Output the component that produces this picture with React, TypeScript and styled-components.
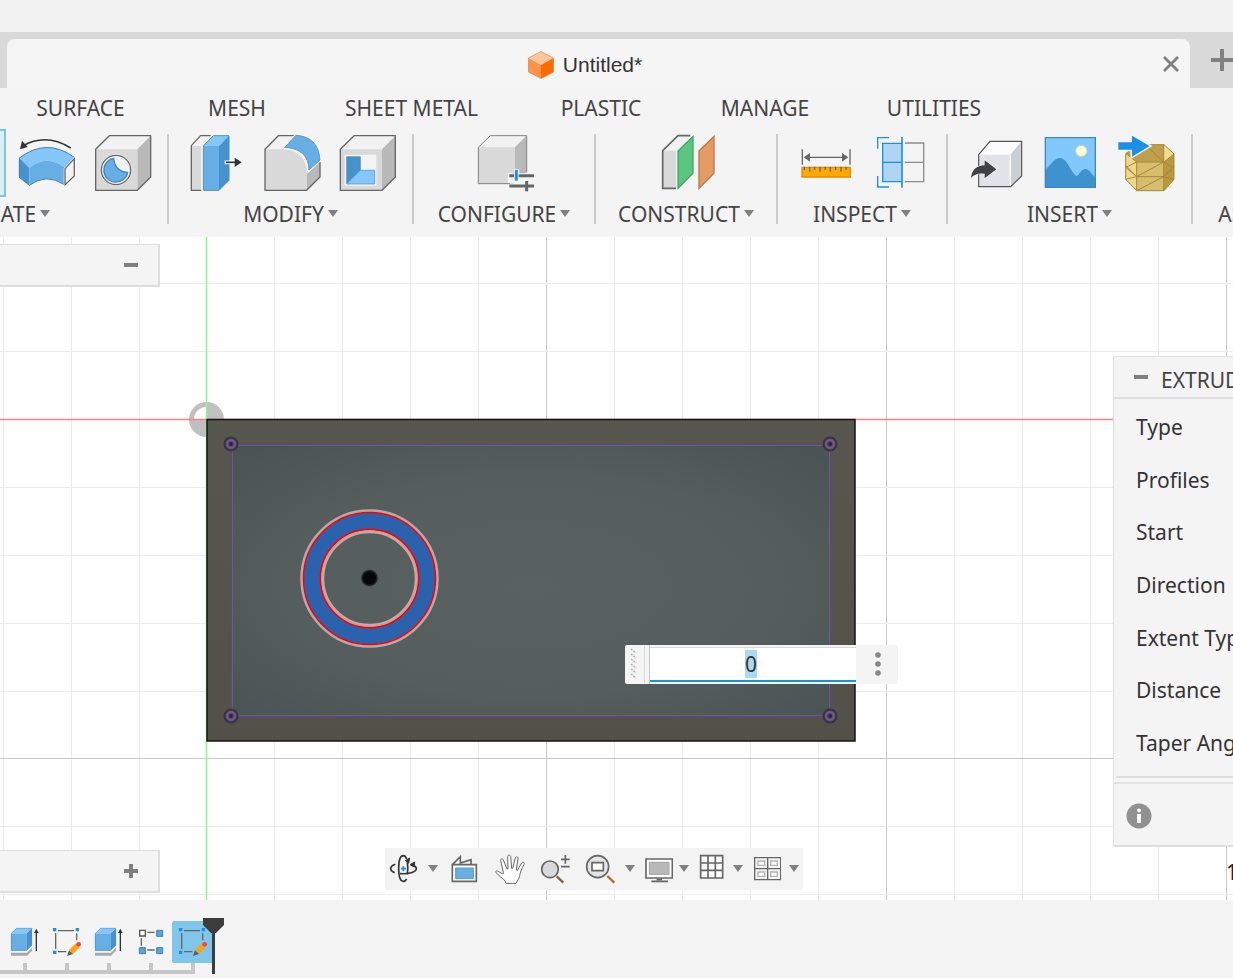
import React, { useEffect, useRef } from "react";
import styled, { createGlobalStyle } from "styled-components";

const GlobalStyle = createGlobalStyle`
  * { box-sizing: border-box; }
  html, body { margin: 0; padding: 0; }
  body {
    font-family: "Noto Sans", "Open Sans", sans-serif;
    font-size: 21px;
    color: #3c3c3c;
    background: #f4f4f4;
    overflow: hidden;
  }
  button {
    border: 0;
    padding: 0;
    background: none;
    font: inherit;
    color: inherit;
    cursor: pointer;
  }
  svg { display: block; flex: none; }
`;

/* ---------- page ---------- */

const Page = styled.div`
  display: flex;
  flex-direction: column;
  min-height: 100vh;
  overflow: hidden;
`;

const TitleStrip = styled.div`
  height: 32px;
  background: #f2f2f2;
`;

const DocumentBar = styled.header`
  display: flex;
  height: 56px;
  padding: 7px 0 0 7px;
  background: #d9d9d9;
`;

const DocumentTab = styled.div`
  flex: 1;
  display: flex;
  align-items: center;
  padding-right: 11px;
  border-radius: 8px 8px 0 0;
  background: #f5f5f5;
`;

const DocumentTitle = styled.div`
  flex: 1;
  display: flex;
  align-items: center;
  justify-content: center;
  gap: 9px;
  padding-top: 2px;
  font-family: "Liberation Sans", Arial, sans-serif;
  font-size: 21px;
  line-height: 24px;
  color: #333;
`;

const CloseButton = styled.button`
  width: 16px;
  height: 16px;
`;

const NewTabButton = styled.button`
  display: flex;
  align-items: center;
  width: 43px;
  height: 42px;
  padding-left: 21px;
  overflow: hidden;
`;

/* ---------- ribbon ---------- */

const Ribbon = styled.section`
  padding-bottom: 6px;
  background: #f4f4f4;
  color: #444;
  overflow: hidden;
`;

const RibbonTabs = styled.nav`
  display: flex;
  height: 40px;
`;

const RibbonTab = styled.button<{ $width: number }>`
  flex: none;
  width: ${(p) => p.$width}px;
  text-align: center;
  line-height: 28px;
  white-space: nowrap;
`;

const Groups = styled.div`
  display: flex;
  align-items: flex-start;
`;

const Group = styled.div<{ $width: number; $hidden?: number }>`
  flex: none;
  width: ${(p) => p.$width}px;
  margin-left: ${(p) => -(p.$hidden ?? 0)}px;
  padding-top: 1px;
`;

const Separator = styled.div`
  flex: none;
  width: 2px;
  height: 90px;
  margin-top: 6px;
  background: #cbcbcb;
`;

const ToolRow = styled.div<{ $inset: number }>`
  display: flex;
  gap: 7px;
  height: 68px;
  padding-left: ${(p) => p.$inset}px;
`;

const ToolButton = styled.button<{ $active?: boolean }>`
  flex: none;
  width: 68px;
  height: 68px;
  ${(p) => p.$active && "background: #dcedf7; border: 2px solid #7fc4e8;"}
`;

const GroupMenu = styled.button`
  display: flex;
  align-items: center;
  justify-content: center;
  gap: 4px;
  width: 100%;
  height: 34px;
  line-height: 28px;
  white-space: nowrap;
`;

/* ---------- viewport ---------- */

const Viewport = styled.main`
  position: relative;
  flex: 1;
  min-height: 663px;
  background: #fff;
  overflow: hidden;
`;

const Scene = styled.svg`
  position: absolute;
  inset: 0;
  width: 100%;
  height: 100%;
`;

const SidePanel = styled.div<{ $place: "top" | "bottom" }>`
  position: absolute;
  left: 0;
  ${(p) => p.$place}: 7px;
  display: flex;
  align-items: center;
  justify-content: flex-end;
  width: 160px;
  height: 43px;
  padding-right: 20px;
  background: #f4f4f4;
  border: solid #dedede;
  border-width: 1px 2px 2px 0;
`;

const ExtrudePanel = styled.section`
  position: absolute;
  top: 119px;
  right: 0;
  width: 120px;
  background: #f4f4f4;
  border: solid #dedede;
  border-width: 1px 0 2px 1px;
  overflow: hidden;
  white-space: nowrap;
`;

const PanelHeader = styled.div`
  display: flex;
  align-items: center;
  gap: 13px;
  height: 42px;
  padding: 6px 0 0 20px;
  border-bottom: 2px solid #dedede;
`;

const PanelToggle = styled.button`
  display: block;
  padding-bottom: 6px;
`;

const PanelTitle = styled.h2`
  margin: 0;
  font-size: 21px;
  font-weight: 400;
  line-height: 28px;
  color: #444;
`;

const PanelRows = styled.div`
  display: grid;
  grid-template-rows: repeat(7, 1fr);
  align-items: center;
  height: 379px;
  margin-left: 2px;
  padding: 2px 0 7px 20px;
  border-bottom: 2px solid #dedede;
  line-height: 28px;
  color: #333;
`;

const PanelFooter = styled.div`
  display: flex;
  align-items: center;
  height: 61px;
  padding: 3px 0 0 12px;
`;

const FooterRule = styled.div`
  height: 6px;
  border-bottom: 2px solid #e2e2e2;
`;

const ValueBox = styled.div`
  position: absolute;
  top: 408px;
  left: 625px;
  display: flex;
  width: 273px;
  height: 39px;
  border-radius: 2px;
  background: #f4f4f4;
  overflow: hidden;
`;

const Grip = styled.div`
  width: 25px;
  border-right: 1px solid #c8c8c8;
`;

const ValueInput = styled.input`
  width: 206px;
  height: 35px;
  margin-top: 2px;
  padding: 0 4px 0 0;
  border: 0;
  border-top: 1px solid #d8d8d8;
  border-bottom: 2px solid #1296d8;
  outline: 0;
  background: #fff;
  font-family: inherit;
  font-size: 21px;
  color: #333;
  text-align: center;
  &::selection { background: #a9daf2; color: #333; }
`;

const MoreButton = styled.button`
  flex: 1;
  display: flex;
  align-items: center;
  justify-content: center;
  padding: 0 0 2px 2px;
`;

const ViewToolbar = styled.div`
  position: absolute;
  left: 385px;
  bottom: 10px;
  display: flex;
  height: 42px;
  padding-right: 4px;
  background: #f3f3f3;
`;

const ViewButton = styled.button<{ $width: number }>`
  flex: none;
  display: flex;
  align-items: center;
  justify-content: center;
  width: ${(p) => p.$width}px;
`;

const StatusText = styled.div`
  position: absolute;
  left: calc(100% - 7px);
  bottom: 14px;
  line-height: 28px;
  white-space: nowrap;
  color: #222;
`;

/* ---------- timeline ---------- */

const Timeline = styled.footer`
  height: 78px;
  padding-top: 21px;
  background: #f4f4f4;
`;

const TimelineStrip = styled.div`
  position: relative;
  width: fit-content;
  padding-left: 4px;
`;

const Features = styled.div`
  display: flex;
`;

const Feature = styled.div`
  display: flex;
  flex-direction: column;
  align-items: center;
  &::after {
    content: "";
    width: 4px;
    height: 7px;
    background: #c6c6c6;
  }
`;

const FeatureButton = styled.button<{ $current?: boolean }>`
  width: 42px;
  height: 42px;
  border-radius: 2px;
  background: ${(p) => (p.$current ? "#7fc6ea" : "none")};
`;

const Track = styled.div`
  height: 4px;
  margin: 0 19px 0 -4px;
  background: #c6c6c6;
`;

const Marker = styled.svg`
  position: absolute;
  right: -10px;
  top: -3px;
`;

/* ---------- small drawings ---------- */

const Caret = () => (
  <svg width="10" height="12" viewBox="0 0 10 12">
    <path d="M0 2h10L5 9z" fill="#808080" />
  </svg>
);

const Minus = () => (
  <svg width="14" height="14" viewBox="0 0 14 14">
    <path d="M0 7h14" stroke="#808080" strokeWidth="4" />
  </svg>
);

const Plus = () => (
  <svg width="14" height="14" viewBox="0 0 14 14">
    <path d="M0 7h14M7 0v14" stroke="#808080" strokeWidth="4" />
  </svg>
);

const ToolIcon = ({ x, children }: { x: number; children: React.ReactNode }) => (
  <svg width="68" height="68" viewBox={`${x} 117 204 204`}>
    {children}
  </svg>
);

const Bend = () => (
  <ToolIcon x={39}>
    <path d="M68 168q70-40 144 6" fill="none" stroke="#333" strokeWidth="4.5" />
    <path d="M60 178l6-26 17 19z" fill="#333" />
    <path d="M58 204q82-62 165-2l-30 30q-54-40-105 2z" fill="#86c7f9" />
    <path d="M58 204l30 30v52l-30-24z" fill="#4592cd" />
    <path d="M88 234q51-42 105-2v52q-54-36-105 2z" fill="#67aee4" />
    <path d="M58 204q82-62 165-2l-30 30v52q-54-36-105 2l-30-24z" fill="none" stroke="#3c7fb5" strokeWidth="3" />
    <path d="M195 236l28-30v52l-28 26z" fill="#f4f4f4" stroke="#fff" strokeWidth="8" />
    <path d="M195 236l28-30v52l-28 26z" fill="#f2f2f2" stroke="#666" strokeWidth="4" />
  </ToolIcon>
);

const CubeBody = () => (
  <>
    <path d="M287 178l41-41h124l-40 41z" fill="#f2f2f2" />
    <path d="M412 178l40-41v124l-40 40z" fill="#b9b9b9" />
    <path d="M287 178h125v123H287z" fill="#d9d9d9" />
    <path d="M287 178l41-41h124v124l-40 40H287z" fill="none" stroke="#666" strokeWidth="4" strokeLinejoin="round" />
  </>
);

const Hole = () => (
  <ToolIcon x={264}>
    <CubeBody />
    <circle cx="348" cy="240" r="47" fill="#fff" />
    <circle cx="348" cy="240" r="44" fill="#f2f2f2" stroke="#666" strokeWidth="4" />
    <path d="M341 205c2 26 18 42 42 42a36 36 0 1 1-42-42z" fill="#67aee4" stroke="#3e88c2" strokeWidth="4" />
  </ToolIcon>
);

const PressPull = () => (
  <ToolIcon x={549}>
    <path d="M575 168l27-31h30l-28 30v134h-29z" fill="#d9d9d9" />
    <path d="M575 168l27-31h32l-28 31z" fill="#f2f2f2" />
    <path d="M604 301h-30V167l28-30h30" fill="none" stroke="#666" strokeWidth="4" />
    <path d="M607 304V165l32-30h51" fill="none" stroke="#fff" strokeWidth="4" />
    <path d="M610 168l30-31h47l-30 31z" fill="#86c7f9" />
    <path d="M610 168h47v133h-47z" fill="#67aee4" />
    <path d="M657 168l30-31v134l-30 30z" fill="#4592cd" />
    <path d="M610 168l30-31h47v134l-30 30h-47z" fill="none" stroke="#4592cd" strokeWidth="3" />
    <path d="M674 217h34" stroke="#fff" strokeWidth="11" />
    <path d="M678 217h30" stroke="#333" strokeWidth="5" />
    <path d="M704 203l21 14-21 14z" fill="#333" />
  </ToolIcon>
);

const Fillet = () => (
  <ToolIcon x={774}>
    <path d="M795 178l40-41h50l-32 41z" fill="#f2f2f2" />
    <path d="M920 245l40-30v46l-40 40z" fill="#b9b9b9" />
    <path d="M795 178h56q70 6 70 76v47H795z" fill="#d9d9d9" />
    <path d="M883 137h-48l-40 41v123h125l40-40v-45" fill="none" stroke="#666" strokeWidth="4" strokeLinejoin="round" />
    <path d="M854 172l34-36q67 4 72 74l-33 30q-2-64-73-68z" fill="#67aee4" stroke="#fff" strokeWidth="9" />
    <path d="M854 172l34-36q67 4 72 74l-33 30q-2-64-73-68z" fill="#67aee4" stroke="#559bd0" strokeWidth="3" />
  </ToolIcon>
);

const Shell = () => (
  <ToolIcon x={999}>
    <g transform="translate(734 0)">
      <CubeBody />
    </g>
    <path d="M1034 194h95v93h-95z" fill="#f4f4f4" />
    <path d="M1040 200h41v41l-41 41z" fill="#4592cd" />
    <path d="M1081 241h43v41h-84z" fill="#86c7f9" />
    <path d="M1081 241v-41h-41v82h84v-41h-43l-39 39" fill="none" stroke="#3e88c2" strokeWidth="2" />
  </ToolIcon>
);

const Configure = () => (
  <ToolIcon x={180}>
    <path d="M205 172l36-35h109l-36 35z" fill="#f2f2f2" />
    <path d="M314 172l36-35v109l-36 35z" fill="#b9b9b9" />
    <path d="M205 172h109v109H205z" fill="#d9d9d9" />
    <path d="M300 281h-95V172l36-35h109v110" fill="none" stroke="#808080" strokeWidth="3" />
    <path d="M293 250h20v-10h15v10h48v40h-64v-12h-19z" fill="#f4f4f4" />
    <path d="M298 257h74M298 288h74" stroke="#666" strokeWidth="9" />
    <path d="M350 273v31" stroke="#666" strokeWidth="9" />
    <path d="M319 238v36" stroke="#fff" strokeWidth="14" />
    <path d="M319 240v32" stroke="#1b8fe6" strokeWidth="9" />
  </ToolIcon>
);

const Construct = () => (
  <ToolIcon x={726}>
    <path d="M757 182l47-45h38l-42 45z" fill="#f2f2f2" />
    <path d="M757 182h42v113h-42z" fill="#d9d9d9" />
    <path d="M798 295h-40V182l46-45h37" fill="none" stroke="#666" strokeWidth="5" />
    <path d="M804 183l45-44v111l-45 45z" fill="#5ac67f" stroke="#fff" strokeWidth="8" />
    <path d="M804 183l45-44v111l-45 45z" fill="#5ac67f" stroke="#41a566" strokeWidth="4" />
    <path d="M867 183l45-44v111l-45 45z" fill="#e69a64" stroke="#bc794c" strokeWidth="4" />
  </ToolIcon>
);

const Measure = () => (
  <ToolIcon x={6}>
    <path d="M37 178v46M180 178v46M52 202h112" stroke="#666" strokeWidth="4" fill="none" />
    <path d="M41 202l19-13v26zM175 202l-19-13v26z" fill="#666" />
    <path d="M36 232h145v29H36z" fill="#ffa800" stroke="#e08e00" strokeWidth="4" />
    <path d="M43 230v10M59 230v15M74 230v10M90 230v15M106 230v10M121 230v15M137 230v10M153 230v15M168 230v10" stroke="#666" strokeWidth="4" />
  </ToolIcon>
);

const Section = () => (
  <ToolIcon x={231}>
    <path d="M278 160h56v115h-56z" fill="#b0d4f1" />
    <path d="M336 160h-58v115h58M278 217h56M297 143h-34v33M263 258v33h34" fill="none" stroke="#1b8fe6" strokeWidth="4" />
    <path d="M336 141v152" stroke="#1b8fe6" strokeWidth="5" />
    <path d="M345 159h56v116h-56M345 217h56" fill="none" stroke="#8c8c8c" strokeWidth="4" />
  </ToolIcon>
);

const InsertPart = () => (
  <ToolIcon x={516}>
    <path d="M566 194l34-40h95l-34 40z" fill="#fcfcfd" />
    <path d="M661 194l34-40v104l-32 32z" fill="#cbced5" />
    <path d="M566 194h95v96h-95z" fill="#e1e3e8" />
    <path d="M566 194l34-40h95v104l-33 32h-96z" fill="none" stroke="#555" strokeWidth="3.5" />
    <path d="M661 196v92" stroke="#fff" strokeWidth="4" />
    <path d="M543 264q4-37 41-38v-15l35 27-35 27v-14q-27-4-41 13z" fill="#3f4347" stroke="#f4f4f4" strokeWidth="4" paintOrder="stroke" />
  </ToolIcon>
);

const InsertCanvas = () => (
  <ToolIcon x={741}>
    <path d="M766 143h150v149H766z" fill="#82c8fc" />
    <circle cx="874" cy="183" r="17" fill="#ffffcf" stroke="#b9d9b9" strokeWidth="3" />
    <path d="M766 240c20-20 28-36 44-36 22 0 32 44 50 54 10-6 14-21 26-21 14 0 18 16 30 25v30H766z" fill="#3e92cd" />
    <path d="M766 143h150v149H766z" fill="none" stroke="#3e88c2" strokeWidth="4" />
  </ToolIcon>
);

const InsertMesh = () => (
  <ToolIcon x={966}>
    <path d="M1007 192l33-28h82l30 28v76l-30 34h-82l-33-34z" fill="#d8bd6c" />
    <path d="M1007 190l33 26v86l-33-34z" fill="#efd88b" />
    <path d="M1040 164h82l-1 52h-81l-33-26z" fill="#bf9f4c" />
    <path d="M1122 164l30 28-30 24z" fill="#f3dc92" />
    <path d="M1152 192v76l-30 34v-86z" fill="#b9993f" />
    <path d="M1007 192l33-28h82l30 28v76l-30 34h-82l-33-34zM1007 190l33 26h82l30-24M1040 216v86M1121 164v138M1007 232l33-16M1007 232l33 28h81l31-26-31-18M1007 268l33-8M1152 268l-31-8M1040 260l81-44M1040 302l81-42M1066 164l55 52M1007 226l33 34M1121 260l31-34" fill="none" stroke="#a5893c" strokeWidth="3" />
    <path d="M985 157h41v-20l53 31-53 32v-21h-41z" fill="#1b8fe6" stroke="#f4f4f4" strokeWidth="9" paintOrder="stroke" />
  </ToolIcon>
);

const ViewIcon = ({ x, children }: { x: number; children: React.ReactNode }) => (
  <svg width="30" height="42" viewBox={`${x} 24 90 126`}>
    {children}
  </svg>
);

const Orbit = () => (
  <ViewIcon x={27}>
    <g fill="none" stroke="#333" strokeWidth="5">
      <path d="M80 117q-4 7-10 7c-9 0-14-17-14-39s5-38 14-38q6 0 10 10" />
      <path d="M82 67q3 17 0 36" />
      <path d="M46 73c-20 8-17 19-2 25M60 101c30 2 50-7 49-15q0-6-10-10" />
    </g>
    <path d="M76 62l13-8-3 16zM90 74l14-8-1 15z" fill="#333" stroke="#333" strokeWidth="3" />
    <path d="M63 86h15M70 79v15" stroke="#1b8fe6" strokeWidth="5" />
  </ViewIcon>
);

const LookAt = () => (
  <ViewIcon x={207}>
    <path d="M218 73l23-23v19l32-10v14" fill="#f4f4f4" stroke="#666" strokeWidth="5" />
    <path d="M217 74h72v50h-72z" fill="#fff" stroke="#666" strokeWidth="5" />
    <path d="M227 84h53v32h-53z" fill="#67aee4" stroke="#559bd0" strokeWidth="3" />
  </ViewIcon>
);

const Pan = () => (
  <ViewIcon x={345}>
    <path
      d="M378 130c-3-10-9-14-17-20-5-4-9-9-13-12-3-4 2-7 6-4l14 8c2 0 3-2 2-4l-8-36c-1-6 6-8 8-2l11 27 3-1-1-36c0-6 8-6 9 0l3 35h3l8-31c2-6 9-4 8 2l-5 34 3 1 13-22c4-5 10-1 7 4-8 14-11 24-13 34-2 9-6 14-11 23z"
      fill="#fff"
      stroke="#666"
      strokeWidth="3"
      strokeLinejoin="round"
    />
  </ViewIcon>
);

const Zoom = () => (
  <ViewIcon x={483}>
    <path d="M530 109l20 19" stroke="#8a6238" strokeWidth="7" />
    <circle cx="510" cy="88" r="25" fill="#d9d9d9" stroke="#666" strokeWidth="5" />
    <path d="M543 58h26M556 45v26M543 80h26" stroke="#666" strokeWidth="5" />
  </ViewIcon>
);

const ZoomWindow = () => (
  <ViewIcon x={615}>
    <path d="M682 108l21 20" stroke="#a86e24" strokeWidth="7" />
    <circle cx="653" cy="80" r="33" fill="#e4e4e4" stroke="#666" strokeWidth="5" />
    <path d="M636 68h34v24h-34z" fill="#fff" stroke="#666" strokeWidth="5" />
  </ViewIcon>
);

const Display = () => (
  <ViewIcon x={790}>
    <path d="M799 57h79v57h-79z" fill="#fff" stroke="#666" strokeWidth="5" />
    <path d="M809 67h59v36h-59z" fill="#b9b9b9" stroke="#a2a2a2" strokeWidth="3" />
    <path d="M831 118h16M815 124h50" stroke="#666" strokeWidth="5" />
  </ViewIcon>
);

const GridIcon = () => (
  <ViewIcon x={948}>
    <path d="M962 47h66v67h-66zM984 47v67M1006 47v67M962 69h66M962 91h66" fill="#fff" stroke="#666" strokeWidth="5" />
  </ViewIcon>
);

const Viewports = () => (
  <ViewIcon x={1113}>
    <path d="M1124 53h78v66h-78zM1163 53v66M1124 86h78" fill="#f4f4f4" stroke="#666" strokeWidth="4" />
    <path d="M1134 63h20v13h-20zM1172 63h20v13h-20zM1134 96h20v13h-20zM1172 96h20v13h-20z" fill="#fff" stroke="#b3b3b3" strokeWidth="4" />
  </ViewIcon>
);

const FeatureIcon = ({ x, children }: { x: number; children: React.ReactNode }) => (
  <svg width="42" height="42" viewBox={`${x} 243 126 126`}>
    {children}
  </svg>
);

const ExtrudeFeature = () => (
  <FeatureIcon x={12}>
    <path d="M33 338h48l15-15v9l-15 15H33z" fill="#a9a9a9" />
    <path d="M33 281l17-16h46l-17 16z" fill="#86c7f9" />
    <path d="M79 281l17-16v51l-17 16z" fill="#4592cd" />
    <path d="M33 281h46v51H33z" fill="#67aee4" />
    <path d="M34 280l16-15h45v51l-16 15H34z" fill="none" stroke="#4592cd" strokeWidth="2" />
    <path d="M109 333v-58" stroke="#333" strokeWidth="4" />
    <path d="M102 279l7-13 7 13z" fill="#333" />
  </FeatureIcon>
);

const SketchFeature = () => (
  <FeatureIcon x={138}>
    <path d="M174 272h48M167 279v48M174 335h25M230 280v21" stroke="#666" strokeWidth="4" />
    <path d="M159 264h10v10h-10zM227 264h10v10h-10zM159 332h10v10h-10z" fill="#1b8fe6" />
    <path d="M207 330l20-20 12 12-20 20z" fill="#ffa514" />
    <path d="M201 348l6-17 12 11z" fill="#5d5d5d" />
    <circle cx="236" cy="313" r="7" fill="#f5424a" />
  </FeatureIcon>
);

const PatternFeature = () => (
  <FeatureIcon x={390}>
    <path d="M442 277h22M424 295v22M442 330h22" stroke="#666" strokeWidth="4" />
    <path d="M419 271h17v17h-17z" fill="#fff" stroke="#555" strokeWidth="4" />
    <path d="M470 271h18v18h-18zM418 323h18v18h-18zM470 323h18v18h-18z" fill="#5ba3dc" stroke="#3e80b3" strokeWidth="3" />
  </FeatureIcon>
);

/* ---------- scene ---------- */

const PITCH = 67.93;
const columns = Array.from({ length: 64 }, (_, i) => i - 3);
const rows = Array.from({ length: 30 }, (_, i) => i - 2);
const corners = [
  [25, 25],
  [624, 25],
  [25, 297],
  [624, 297],
];

const lineColor = (i: number) => (i % 5 === 0 ? "#c9c9c9" : "#ececec");

const ModelScene = () => (
  <Scene aria-label="Model view">
    <defs>
      <radialGradient id="floor" cx="50%" cy="52%" r="68%">
        <stop offset="0" stopColor="#5a6261" />
        <stop offset="0.6" stopColor="#555e5d" />
        <stop offset="1" stopColor="#4b5454" />
      </radialGradient>
      <linearGradient id="wall" x1="0" y1="0" x2="0" y2="1">
        <stop offset="0" stopColor="#57574f" />
        <stop offset="1" stopColor="#534f49" />
      </linearGradient>
      <radialGradient id="hub">
        <stop offset="0.7" stopColor="#050808" />
        <stop offset="1" stopColor="#050808" stopOpacity="0.4" />
      </radialGradient>
    </defs>
    {columns.map((i) => {
      const x = Math.round(206.55 + i * PITCH) + 0.5;
      return i === 0 ? null : <line key={i} x1={x} x2={x} y1="0" y2="100%" stroke={lineColor(i)} />;
    })}
    {rows.map((i) => {
      const y = Math.round(181.8 + i * PITCH) + 0.5;
      return i === 0 ? null : <line key={i} x1="0" x2="100%" y1={y} y2={y} stroke={lineColor(i)} />;
    })}
    <circle cx="206.5" cy="182.5" r="17.5" fill="#c0c0c0" />
    <path d="M206.5 182.5v-12.5a12.5 12.5 0 0 0-12.5 12.5z" fill="#fff" />
    <line x1="0" x2="100%" y1="182.5" y2="182.5" stroke="#ff8080" strokeWidth="1.5" />
    <line x1="206.5" x2="206.5" y1="0" y2="100%" stroke="#8df58d" strokeWidth="1.5" />
    <g transform="translate(206 182)">
      <rect x="1" y="0.5" width="648" height="321.5" fill="url(#wall)" stroke="#141414" strokeWidth="1.5" />
      <rect x="25.5" y="25.5" width="599" height="272" fill="url(#floor)" stroke="#594a76" strokeWidth="2" />
      <rect x="26.5" y="26.5" width="597" height="270" fill="none" stroke="#7a7288" strokeWidth="0.5" />
      {corners.map(([x, y]) => (
        <g key={`${x}-${y}`}>
          <circle cx={x} cy={y} r="6.5" fill="#5c4a72" stroke="#38333c" strokeWidth="2" />
          <circle cx={x} cy={y} r="4" fill="none" stroke="#755c96" strokeWidth="1.5" />
          <circle cx={x} cy={y} r="2" fill="#2c2438" />
        </g>
      ))}
      <g fill="none">
        <circle cx="163.5" cy="159.5" r="58" stroke="#2b62ae" strokeWidth="17" />
        <circle cx="163.5" cy="159.5" r="68" stroke="#b0adab" strokeWidth="2.5" />
        <circle cx="163.5" cy="159.5" r="66.5" stroke="#f88" strokeWidth="1.5" />
        <circle cx="163.5" cy="159.5" r="66" stroke="#f00505" strokeWidth="1.5" />
        <circle cx="163.5" cy="159.5" r="46.5" stroke="#b5b2ae" strokeWidth="2.5" />
        <circle cx="163.5" cy="159.5" r="48" stroke="#f88" strokeWidth="1.5" />
        <circle cx="163.5" cy="159.5" r="49.2" stroke="#f00505" strokeWidth="1.5" />
      </g>
      <circle cx="163.5" cy="159" r="8.5" fill="url(#hub)" />
    </g>
  </Scene>
);

/* ---------- data ---------- */

const tabs: [string, number][] = [
  ["SURFACE", 161],
  ["MESH", 152],
  ["SHEET METAL", 197],
  ["PLASTIC", 182],
  ["MANAGE", 146],
  ["UTILITIES", 192],
];

type Tool = { name: string; icon?: React.ReactNode; active?: boolean };

const groups: { label: string; width: number; inset: number; hidden?: number; tools: Tool[] }[] = [
  {
    label: "CREATE",
    width: 321,
    inset: 17,
    hidden: 154,
    tools: [
      { name: "Sketch" },
      { name: "Extrude", active: true },
      { name: "Bend", icon: <Bend /> },
      { name: "Hole", icon: <Hole /> },
    ],
  },
  {
    label: "MODIFY",
    width: 243,
    inset: 14,
    tools: [
      { name: "Press Pull", icon: <PressPull /> },
      { name: "Fillet", icon: <Fillet /> },
      { name: "Shell", icon: <Shell /> },
    ],
  },
  { label: "CONFIGURE", width: 180, inset: 56, tools: [{ name: "Configure", icon: <Configure /> }] },
  { label: "CONSTRUCT", width: 180, inset: 56, tools: [{ name: "Offset Plane", icon: <Construct /> }] },
  {
    label: "INSPECT",
    width: 168,
    inset: 14,
    tools: [
      { name: "Measure", icon: <Measure /> },
      { name: "Section", icon: <Section /> },
    ],
  },
  {
    label: "INSERT",
    width: 243,
    inset: 14,
    tools: [
      { name: "Insert Part", icon: <InsertPart /> },
      { name: "Canvas", icon: <InsertCanvas /> },
      { name: "Insert Mesh", icon: <InsertMesh /> },
    ],
  },
  { label: "ASSEMBLE", width: 168, inset: 56, tools: [] },
];

const viewTools: { name: string; width: number; icon: React.ReactNode }[] = [
  { name: "Orbit", width: 38, icon: <Orbit /> },
  { name: "Orbit options", width: 20, icon: <Caret /> },
  { name: "Look At", width: 42, icon: <LookAt /> },
  { name: "Pan", width: 50, icon: <Pan /> },
  { name: "Zoom", width: 42, icon: <Zoom /> },
  { name: "Zoom Window", width: 46, icon: <ZoomWindow /> },
  { name: "Zoom options", width: 14, icon: <Caret /> },
  { name: "Display Settings", width: 42, icon: <Display /> },
  { name: "Display options", width: 10, icon: <Caret /> },
  { name: "Grid", width: 44, icon: <GridIcon /> },
  { name: "Grid options", width: 10, icon: <Caret /> },
  { name: "Viewports", width: 46, icon: <Viewports /> },
  { name: "Viewport options", width: 10, icon: <Caret /> },
];

const fields = ["Type", "Profiles", "Start", "Direction", "Extent Type", "Distance", "Taper Angle"];

const features: { name: string; icon: React.ReactNode; current?: boolean }[] = [
  { name: "Extrude 1", icon: <ExtrudeFeature /> },
  { name: "Sketch 2", icon: <SketchFeature /> },
  { name: "Extrude 2", icon: <ExtrudeFeature /> },
  { name: "Pattern 1", icon: <PatternFeature /> },
  { name: "Sketch 3", icon: <SketchFeature />, current: true },
];

/* ---------- app ---------- */

export default function App() {
  const distance = useRef<HTMLInputElement>(null);

  useEffect(() => {
    distance.current?.focus();
    distance.current?.select();
  }, []);

  return (
    <Page>
      <GlobalStyle />
      <TitleStrip />
      <DocumentBar>
        <DocumentTab>
          <DocumentTitle>
            <svg width="26" height="28" viewBox="0 0 26 28">
              <path d="M13 0.5L25.5 7 13 14 0.5 7z" fill="#ffc59c" />
              <path d="M0.5 7L13 14v13.5L0.5 21z" fill="#ff924a" />
              <path d="M25.5 7L13 14v13.5L25.5 21z" fill="#ff6a00" />
              <path d="M13 0.5L25.5 7v14L13 27.5 0.5 21V7z" fill="none" stroke="#d9772f" strokeWidth="0.6" />
            </svg>
            Untitled*
          </DocumentTitle>
          <CloseButton aria-label="Close document">
            <svg width="16" height="16" viewBox="0 0 16 16">
              <path d="M1 1l14 14M15 1L1 15" stroke="#808080" strokeWidth="2.8" />
            </svg>
          </CloseButton>
        </DocumentTab>
        <NewTabButton aria-label="New document">
          <svg width="22" height="22" viewBox="0 0 22 22">
            <path d="M0 11h22M11 0v22" stroke="#808080" strokeWidth="4" />
          </svg>
        </NewTabButton>
      </DocumentBar>

      <Ribbon>
        <RibbonTabs>
          {tabs.map(([label, width]) => (
            <RibbonTab key={label} $width={width}>
              {label}
            </RibbonTab>
          ))}
        </RibbonTabs>
        <Groups>
          {groups.map((group, i) => (
            <React.Fragment key={group.label}>
              {i > 0 && <Separator />}
              <Group $width={group.width} $hidden={group.hidden}>
                <ToolRow $inset={group.inset}>
                  {group.tools.map((tool) => (
                    <ToolButton key={tool.name} aria-label={tool.name} $active={tool.active}>
                      {tool.icon}
                    </ToolButton>
                  ))}
                </ToolRow>
                <GroupMenu>
                  {group.label}
                  <Caret />
                </GroupMenu>
              </Group>
            </React.Fragment>
          ))}
        </Groups>
      </Ribbon>

      <Viewport>
        <ModelScene />
        <SidePanel $place="top">
          <button aria-label="Collapse browser">
            <Minus />
          </button>
        </SidePanel>
        <SidePanel $place="bottom">
          <button aria-label="Expand comments">
            <Plus />
          </button>
        </SidePanel>

        <ValueBox>
          <Grip>
            <svg width="24" height="39" viewBox="0 0 24 39">
              <path
                d="M6 4l5 4M6 9l5 4M6 14l5 4M6 19l5 4M6 24l5 4M6 29l5 4"
                stroke="#b4b4b4"
                strokeWidth="1.5"
                strokeDasharray="2 1"
              />
              <path d="M19.5 1v37" stroke="#d9d9d9" />
            </svg>
          </Grip>
          <ValueInput ref={distance} aria-label="Distance" defaultValue="0" />
          <MoreButton aria-label="More">
            <svg width="6" height="24" viewBox="0 0 6 24">
              <g fill="#868686">
                <circle cx="3" cy="3" r="2.8" />
                <circle cx="3" cy="12" r="2.8" />
                <circle cx="3" cy="21" r="2.8" />
              </g>
            </svg>
          </MoreButton>
        </ValueBox>

        <ExtrudePanel>
          <PanelHeader>
            <PanelToggle aria-label="Collapse panel">
              <Minus />
            </PanelToggle>
            <PanelTitle>EXTRUDE</PanelTitle>
          </PanelHeader>
          <PanelRows>
            {fields.map((field) => (
              <span key={field}>{field}</span>
            ))}
          </PanelRows>
          <FooterRule />
          <PanelFooter>
            <svg width="26" height="26" viewBox="0 0 26 26">
              <circle cx="13" cy="13" r="12.5" fill="#919191" />
              <circle cx="13" cy="7.5" r="2" fill="#fff" />
              <path d="M13 11v9" stroke="#fff" strokeWidth="4" />
            </svg>
          </PanelFooter>
        </ExtrudePanel>

        <ViewToolbar>
          {viewTools.map((tool) => (
            <ViewButton key={tool.name} aria-label={tool.name} $width={tool.width}>
              {tool.icon}
            </ViewButton>
          ))}
        </ViewToolbar>
        <StatusText>1 Profile</StatusText>
      </Viewport>

      <Timeline>
        <TimelineStrip>
          <Features>
            {features.map((feature) => (
              <Feature key={feature.name}>
                <FeatureButton aria-label={feature.name} $current={feature.current}>
                  {feature.icon}
                </FeatureButton>
              </Feature>
            ))}
          </Features>
          <Track />
          <Marker width="21" height="56" viewBox="0 0 21 56">
            <path d="M0 0h21v7l-8 8h-5L0 7z" fill="#3c3c3c" />
            <path d="M10.5 8v48" stroke="#3c3c3c" strokeWidth="3" />
          </Marker>
        </TimelineStrip>
      </Timeline>
    </Page>
  );
}
